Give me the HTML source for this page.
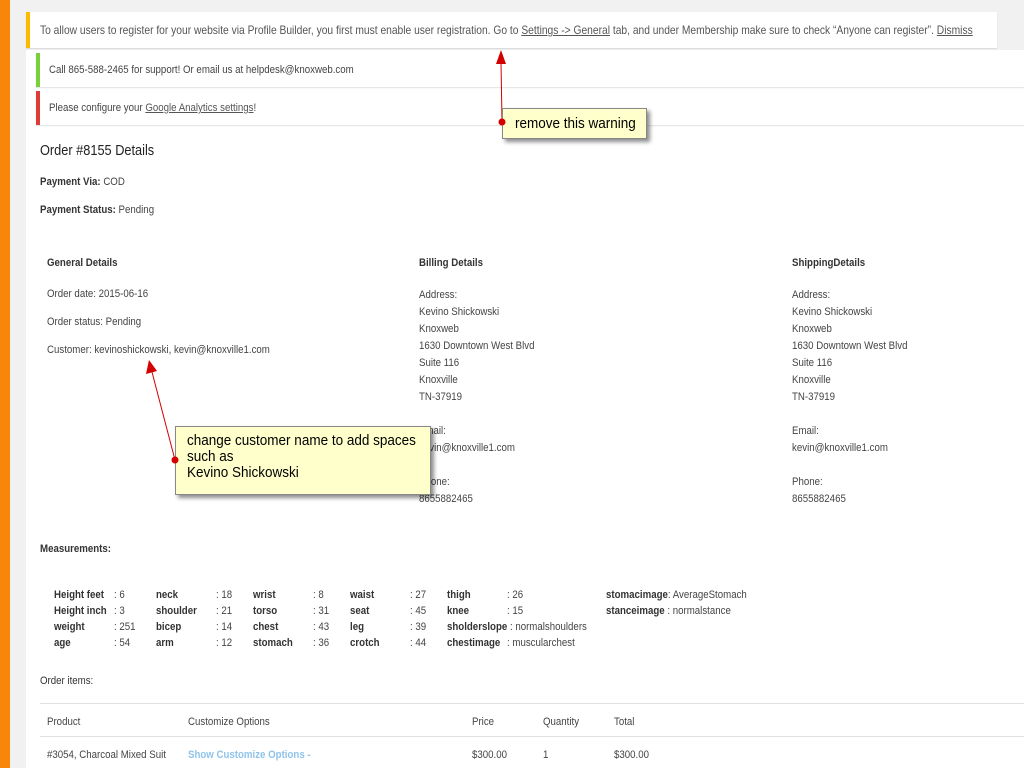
<!DOCTYPE html>
<html><head><meta charset="utf-8"><style>
*{margin:0;padding:0;box-sizing:border-box}
body{width:1024px;height:768px;overflow:hidden;background:#f1f1f1;font-family:"Liberation Sans",sans-serif;font-size:11px;color:#444;position:relative}
.a{position:absolute;white-space:nowrap;transform:scaleX(.88);transform-origin:left}
.b{font-weight:bold;color:#333}
u{color:#555}
.notice{position:absolute;background:#fff;box-shadow:0 1px 1px rgba(0,0,0,.1)}
.call{position:absolute;background:#ffffcc;border:1px solid #888;box-shadow:3px 3px 4px rgba(0,0,0,.45);font-family:"Liberation Sans",sans-serif;color:#000;font-size:15px;line-height:16px}
.call span{display:inline-block;transform:scaleX(.9);transform-origin:left;white-space:nowrap}
</style></head><body>
<div style="position:absolute;left:0;top:0;width:10px;height:768px;background:#f7860b"></div>
<div class="notice" style="left:26px;top:12px;width:971px;height:36px;border-left:4px solid #ffba00"></div>
<div class="a" style="left:40px;top:24px;font-size:11.6px;color:#555;transform:scaleX(.885)">To allow users to register for your website via Profile Builder, you first must enable user registration. Go to <u>Settings -&gt; General</u> tab, and under Membership make sure to check “Anyone can register”. <u>Dismiss</u></div>
<div style="position:absolute;left:26px;top:50px;width:998px;height:718px;background:#fff"></div>
<div class="notice" style="left:36px;top:53px;width:988px;height:34px;border-left:4px solid #7ad03a;box-shadow:0 1px 1px rgba(0,0,0,.12)"></div>
<div class="a" style="left:49px;top:64px">Call 865-588-2465 for support! Or email us at helpdesk@knoxweb.com</div>
<div class="notice" style="left:36px;top:91px;width:988px;height:34px;border-left:4px solid #dd3d36;box-shadow:0 1px 1px rgba(0,0,0,.12)"></div>
<div class="a" style="left:49px;top:102px">Please configure your <u>Google Analytics settings</u>!</div>
<div class="a" style="left:40px;top:143px;font-size:14.5px;color:#222">Order #8155 Details</div>
<div class="a" style="left:40px;top:176px"><span class="b">Payment Via:</span> COD</div>
<div class="a" style="left:40px;top:204px"><span class="b">Payment Status:</span> Pending</div>

<div class="a b" style="left:47px;top:257px">General Details</div>
<div class="a" style="left:47px;top:288px">Order date: 2015-06-16</div>
<div class="a" style="left:47px;top:316px">Order status: Pending</div>
<div class="a" style="left:47px;top:344px">Customer: kevinoshickowski, kevin@knoxville1.com</div>

<div class="a b" style="left:419px;top:257px">Billing Details</div>
<div class="a" style="left:419px;top:287px;line-height:17px">Address:<br>Kevino Shickowski<br>Knoxweb<br>1630 Downtown West Blvd<br>Suite 116<br>Knoxville<br>TN-37919<br><br>Email:<br>kevin@knoxville1.com<br><br>Phone:<br>8655882465</div>
<div class="a b" style="left:792px;top:257px">ShippingDetails</div>
<div class="a" style="left:792px;top:287px;line-height:17px">Address:<br>Kevino Shickowski<br>Knoxweb<br>1630 Downtown West Blvd<br>Suite 116<br>Knoxville<br>TN-37919<br><br>Email:<br>kevin@knoxville1.com<br><br>Phone:<br>8655882465</div>

<div class="a b" style="left:40px;top:543px">Measurements:</div>
<div class="a b" style="left:54px;top:587px;line-height:16px">Height feet<br>Height inch<br>weight<br>age</div>
<div class="a" style="left:114px;top:587px;line-height:16px">: 6<br>: 3<br>: 251<br>: 54</div>
<div class="a b" style="left:156px;top:587px;line-height:16px">neck<br>shoulder<br>bicep<br>arm</div>
<div class="a" style="left:216px;top:587px;line-height:16px">: 18<br>: 21<br>: 14<br>: 12</div>
<div class="a b" style="left:253px;top:587px;line-height:16px">wrist<br>torso<br>chest<br>stomach</div>
<div class="a" style="left:313px;top:587px;line-height:16px">: 8<br>: 31<br>: 43<br>: 36</div>
<div class="a b" style="left:350px;top:587px;line-height:16px">waist<br>seat<br>leg<br>crotch</div>
<div class="a" style="left:410px;top:587px;line-height:16px">: 27<br>: 45<br>: 39<br>: 44</div>
<div class="a b" style="left:447px;top:587px;line-height:16px">thigh<br>knee</div>
<div class="a" style="left:507px;top:587px;line-height:16px">: 26<br>: 15</div>
<div class="a" style="left:447px;top:619px;line-height:16px"><span class="b">sholderslope</span> : normalshoulders</div>
<div class="a b" style="left:447px;top:635px;line-height:16px">chestimage</div>
<div class="a" style="left:507px;top:635px;line-height:16px">: muscularchest</div>
<div class="a" style="left:606px;top:587px;line-height:16px"><span class="b">stomacimage</span>: AverageStomach<br><span class="b">stanceimage</span> : normalstance</div>

<div class="a" style="left:40px;top:675px;color:#333">Order items:</div>
<div style="position:absolute;left:40px;top:703px;width:984px;border-top:1px solid #e1e1e1"></div>
<div style="position:absolute;left:40px;top:736px;width:984px;border-top:1px solid #e1e1e1"></div>
<div class="a" style="left:47px;top:716px">Product</div>
<div class="a" style="left:188px;top:716px">Customize Options</div>
<div class="a" style="left:472px;top:716px">Price</div>
<div class="a" style="left:543px;top:716px">Quantity</div>
<div class="a" style="left:614px;top:716px">Total</div>
<div class="a" style="left:47px;top:749px">#3054, Charcoal Mixed Suit</div>
<div class="a" style="left:188px;top:749px;color:#8fc3ea;font-weight:bold">Show Customize Options -</div>
<div class="a" style="left:472px;top:749px">$300.00</div>
<div class="a" style="left:543px;top:749px">1</div>
<div class="a" style="left:614px;top:749px">$300.00</div>

<svg style="position:absolute;left:0;top:0" width="1024" height="768">
<line x1="502" y1="122" x2="501" y2="62" stroke="#d40000" stroke-width="1"/>
<polygon points="496,64 501,50 506,64" fill="#d40000"/>
<line x1="175" y1="460" x2="152" y2="372" stroke="#d40000" stroke-width="1"/>
<polygon points="146,374 149,360 157,371" fill="#d40000"/>
</svg>
<div class="call" style="left:502px;top:108px;width:145px;height:31px;padding:7px 0 0 12px"><span>remove this warning</span></div>
<div class="call" style="left:175px;top:426px;width:256px;height:69px;padding:6px 0 0 11px"><span>change customer name to add spaces<br>such as<br>Kevino Shickowski</span></div>
<svg style="position:absolute;left:0;top:0" width="1024" height="768">
<circle cx="502" cy="122" r="3.5" fill="#d40000"/>
<circle cx="175" cy="460" r="3.5" fill="#d40000"/>
</svg>
</body></html>
